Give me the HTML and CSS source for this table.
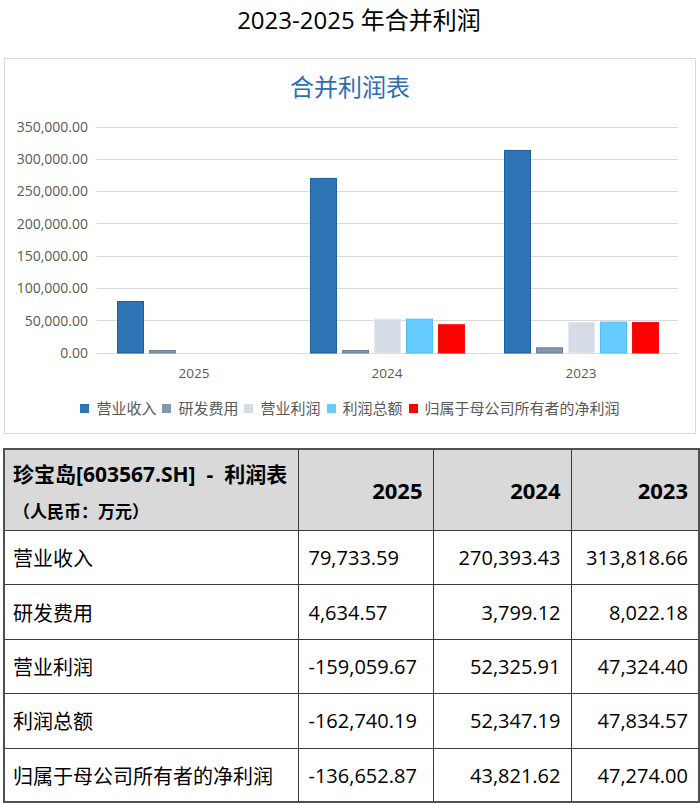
FILE: index.html
```html
<!DOCTYPE html>
<html lang="zh-CN">
<head>
<meta charset="utf-8">
<title>2023-2025 年合并利润</title>
<link rel="stylesheet" href="styles.css">
</head>
<body>
<h1 class="page-title">2023-2025 年合并利润</h1>

<section class="chart-card">
  <div class="chart-title">合并利润表</div>
  <svg class="plot" width="690" height="270" viewBox="0 0 690 270" xmlns="http://www.w3.org/2000/svg">
    <g class="grid">
      <line x1="92" y1="12.5" x2="673" y2="12.5"/>
      <line x1="92" y1="44.5" x2="673" y2="44.5"/>
      <line x1="92" y1="76.5" x2="673" y2="76.5"/>
      <line x1="92" y1="108.5" x2="673" y2="108.5"/>
      <line x1="92" y1="141.5" x2="673" y2="141.5"/>
      <line x1="92" y1="173.5" x2="673" y2="173.5"/>
      <line x1="92" y1="205.5" x2="673" y2="205.5"/>
      <line x1="92" y1="238.5" x2="673" y2="238.5"/>
    </g>
    <g class="ylabels">
      <text x="83" y="17">350,000.00</text>
      <text x="83" y="49">300,000.00</text>
      <text x="83" y="81">250,000.00</text>
      <text x="83" y="114">200,000.00</text>
      <text x="83" y="146">150,000.00</text>
      <text x="83" y="178">100,000.00</text>
      <text x="83" y="211">50,000.00</text>
      <text x="83" y="243">0.00</text>
    </g>
    <g class="bars">
      <!-- 2025 -->
      <rect class="s1" x="112.5" y="186.5" width="26" height="51.5"/>
      <rect class="s2" x="144.5" y="235.5" width="26" height="2.5"/>
      <!-- 2024 -->
      <rect class="s1" x="305.5" y="63.4" width="26" height="174.6"/>
      <rect class="s2" x="337.5" y="235.5" width="26" height="2.5"/>
      <rect class="s3" x="369.5" y="204.2" width="26" height="33.8"/>
      <rect class="s4" x="401.5" y="204.2" width="26" height="33.8"/>
      <rect class="s5" x="433.5" y="209.7" width="26" height="28.3"/>
      <!-- 2023 -->
      <rect class="s1" x="499.5" y="35.4" width="26" height="202.6"/>
      <rect class="s2" x="531.5" y="232.8" width="26" height="5.2"/>
      <rect class="s3" x="563.5" y="207.4" width="26" height="30.6"/>
      <rect class="s4" x="595.5" y="207.1" width="26" height="30.9"/>
      <rect class="s5" x="627.5" y="207.5" width="26" height="30.5"/>
    </g>
    <g class="xlabels">
      <text x="189" y="263">2025</text>
      <text x="382" y="263">2024</text>
      <text x="576" y="263">2023</text>
    </g>
  </svg>
  <ul class="legend">
    <li><span class="swatch c1"></span>营业收入</li>
    <li><span class="swatch c2"></span>研发费用</li>
    <li><span class="swatch c3"></span>营业利润</li>
    <li><span class="swatch c4"></span>利润总额</li>
    <li><span class="swatch c5"></span>归属于母公司所有者的净利润</li>
  </ul>
</section>

<table class="fin-table">
  <colgroup>
    <col class="col-name">
    <col class="col-a">
    <col class="col-b">
    <col class="col-c">
  </colgroup>
  <thead>
    <tr>
      <th class="head-name">
        <div class="head-line1">珍宝岛[603567.SH]&nbsp; -&nbsp; 利润表</div>
        <div class="head-line2">（人民币：万元）</div>
      </th>
      <th class="head-year">2025</th>
      <th class="head-year">2024</th>
      <th class="head-year">2023</th>
    </tr>
  </thead>
  <tbody>
    <tr>
      <td class="name">营业收入</td>
      <td class="num-left">79,733.59</td>
      <td class="num">270,393.43</td>
      <td class="num">313,818.66</td>
    </tr>
    <tr>
      <td class="name">研发费用</td>
      <td class="num-left">4,634.57</td>
      <td class="num">3,799.12</td>
      <td class="num">8,022.18</td>
    </tr>
    <tr>
      <td class="name">营业利润</td>
      <td class="num-left">-159,059.67</td>
      <td class="num">52,325.91</td>
      <td class="num">47,324.40</td>
    </tr>
    <tr>
      <td class="name">利润总额</td>
      <td class="num-left">-162,740.19</td>
      <td class="num">52,347.19</td>
      <td class="num">47,834.57</td>
    </tr>
    <tr>
      <td class="name">归属于母公司所有者的净利润</td>
      <td class="num-left">-136,652.87</td>
      <td class="num">43,821.62</td>
      <td class="num">47,274.00</td>
    </tr>
  </tbody>
</table>
</body>
</html>
```

FILE: styles.css
```css
* {
  box-sizing: border-box;
}

html, body {
  margin: 0;
  padding: 0;
  background: #ffffff;
}

body {
  width: 700px;
  font-family: "Open Sans", "Noto Sans CJK SC", sans-serif;
  color: #000000;
}

.page-title {
  margin: 0 0 18px;
  padding-left: 18px;
  height: 40px;
  line-height: 40px;
  text-align: center;
  font-size: 24px;
  font-weight: normal;
}

.chart-card {
  margin: 0 0 0 4px;
  width: 692px;
  height: 376px;
  border: 1px solid #d9d9d9;
  background: #ffffff;
}

.chart-title {
  height: 56px;
  line-height: 56px;
  text-align: center;
  font-size: 24px;
  color: #2e6db4;
}

.plot {
  display: block;
}

.grid line {
  stroke: #d9d9d9;
  stroke-width: 1;
}

.ylabels text {
  font-family: "Open Sans", "Noto Sans CJK SC", sans-serif;
  font-size: 14px;
  fill: #595959;
  text-anchor: end;
}

.xlabels text {
  font-family: "Open Sans", "Noto Sans CJK SC", sans-serif;
  font-size: 13.5px;
  fill: #595959;
  text-anchor: middle;
}

.bars rect {
  stroke-width: 1;
}

.bars .s1 { fill: #2e75b6; stroke: #1f5f9e; }
.bars .s2 { fill: #8497b0; stroke: #6c7f9a; }
.bars .s3 { fill: #d6dce5; stroke: #e4e8ee; }
.bars .s4 { fill: #66ccff; stroke: #52c0f5; }
.bars .s5 { fill: #ff0000; stroke: #f21010; }

.legend {
  list-style: none;
  margin: 13px 0 0;
  padding: 0;
  display: flex;
  justify-content: center;
  gap: 6px;
  font-size: 15px;
  line-height: 20px;
  color: #595959;
}

.legend li {
  display: flex;
  align-items: center;
  white-space: nowrap;
}

.swatch {
  display: inline-block;
  width: 9px;
  height: 9px;
  margin-right: 7px;
}

.c1 { background: #2e75b6; }
.c2 { background: #8497b0; }
.c3 { background: #d6dce5; }
.c4 { background: #66ccff; }
.c5 { background: #ff0000; }

.fin-table {
  margin: 14px 0 0 3px;
  width: 695px;
  border-collapse: collapse;
  table-layout: fixed;
  border: 2px solid #505050;
  font-size: 20px;
}

.col-name { width: 294px; }
.col-a { width: 135px; }
.col-b { width: 138px; }
.col-c { width: 128px; }

.fin-table th,
.fin-table td {
  border: 1px solid #3a3a3a;
  padding: 0 10px;
  white-space: nowrap;
}

.fin-table thead tr {
  height: 81px;
}

.fin-table th {
  background: #d9d9d9;
  font-weight: bold;
}

.head-name {
  text-align: left;
  vertical-align: top;
  padding: 0 8px !important;
}

.head-line1 {
  padding-top: 4px;
  line-height: 40px;
  font-size: 21px;
}

.head-line2 {
  line-height: 36px;
  font-size: 17px;
}

.head-year {
  text-align: right;
  font-size: 22px;
  vertical-align: middle;
}

.fin-table tbody tr {
  height: 54.4px;
}

.name {
  text-align: left;
  padding-left: 8px !important;
}

.num-left {
  text-align: left;
}

.num {
  text-align: right;
}
```
